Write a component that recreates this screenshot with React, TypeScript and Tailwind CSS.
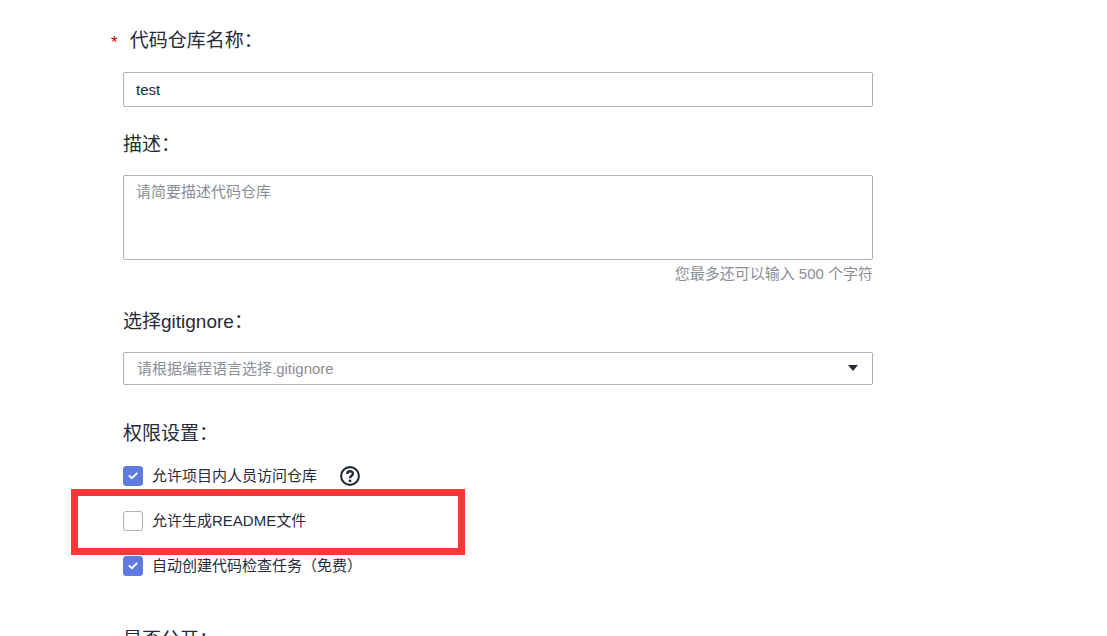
import type { ReactNode } from "react";

function FieldTitle({ htmlFor, required, children }: { htmlFor: string; required?: boolean; children: ReactNode }) {
  return (
    <label
      htmlFor={htmlFor}
      className={`flex w-fit items-center text-[19px] leading-7 ${required ? "-ml-3 gap-3" : ""}`}
    >
      {required && <span className="mt-1 text-[17px] leading-5 text-[#c7000b]">*</span>}
      <span>{children}</span>
    </label>
  );
}

function CheckRow({ id, checked, children }: { id: string; checked?: boolean; children: ReactNode }) {
  return (
    <div className="flex h-5 items-center">
      <span className="relative flex size-5 shrink-0">
        <input
          id={id}
          type="checkbox"
          defaultChecked={checked}
          className="peer size-5 appearance-none rounded-[3px] border border-[#adb0b8] bg-white checked:border-[#5e7ce0] checked:bg-[#5e7ce0]"
        />
        <svg
          viewBox="0 0 20 20"
          className="pointer-events-none absolute inset-0 hidden size-5 peer-checked:block"
          fill="none"
          stroke="#fff"
          strokeWidth="1.9"
        >
          <path d="M5.8 9.4 8.8 12.2 14.2 7" />
        </svg>
      </span>
      <label htmlFor={id} className="ml-[9px] text-[15px] leading-5">
        {children}
      </label>
    </div>
  );
}

export default function App() {
  return (
    <main className="h-screen overflow-hidden bg-white font-['Liberation_Sans','Noto_Sans_CJK_SC',sans-serif] text-[#252b3a]">
      <form className="mr-6 ml-[123px] max-w-[750px] pt-[27px]">
        <FieldTitle htmlFor="name" required>
          代码仓库名称：
        </FieldTitle>
        <input
          id="name"
          type="text"
          defaultValue="test"
          className="mt-[17px] block h-[35px] w-full rounded-[2px] border border-[#adb0b8] px-3 text-[15px] outline-none"
        />

        <div className="mt-6">
          <FieldTitle htmlFor="description">描述：</FieldTitle>
          <textarea
            id="description"
            placeholder="请简要描述代码仓库"
            className="mt-4 block h-[85px] w-full resize-none rounded-[2px] border border-[#adb0b8] px-3 py-[6px] text-[15px] leading-5 outline-none placeholder:text-[#8a8e99]"
          />
          <p className="mt-1 text-right text-[15px] leading-5 text-[#8a8e99]">您最多还可以输入 500 个字符</p>
        </div>

        <div className="mt-6">
          <FieldTitle htmlFor="gitignore">选择gitignore：</FieldTitle>
          <div className="relative mt-4">
            <select
              id="gitignore"
              className="block h-[33px] w-full appearance-none rounded-[2px] border border-[#adb0b8] bg-white px-[13px] pt-[2px] text-[15px] text-[#8a8e99] outline-none"
            >
              <option>请根据编程语言选择.gitignore</option>
            </select>
            <svg
              viewBox="0 0 10 6"
              className="pointer-events-none absolute top-[13px] right-[15px] h-[6px] w-[10px]"
              fill="#252b3a"
            >
              <path d="M0 0h10L5 6z" />
            </svg>
          </div>
        </div>

        <fieldset className="mt-[35px]">
          <legend className="text-[19px] leading-7">权限设置：</legend>
          <div className="mt-[18px] flex flex-col gap-[25px]">
            <div className="flex items-center gap-[23px]">
              <CheckRow id="member-access" checked>
                允许项目内人员访问仓库
              </CheckRow>
              <button type="button" aria-label="帮助" className="size-5">
                <svg viewBox="0 0 20 20" className="size-5" fill="none" stroke="#252b3a">
                  <circle cx="10" cy="10" r="8.9" strokeWidth="2.1" />
                  <path d="M7.2 8C7.2 6.1 8.3 5.3 10 5.3s2.9.9 2.9 2.4c0 2-2.9 2.1-2.9 4.6" strokeWidth="2.4" />
                  <path d="M10 13.7v2.3" strokeWidth="2.6" />
                </svg>
              </button>
            </div>
            <div className="relative">
              <CheckRow id="readme">允许生成README文件</CheckRow>
              <div className="pointer-events-none absolute -top-[22px] -left-[52px] h-[66px] w-[394px] border-7 border-[#fc3737]" />
            </div>
            <CheckRow id="code-check" checked>
              自动创建代码检查任务（免费）
            </CheckRow>
          </div>
        </fieldset>

        <fieldset className="mt-[50px]">
          <legend className="text-[19px] leading-7">是否公开：</legend>
        </fieldset>
      </form>
    </main>
  );
}
